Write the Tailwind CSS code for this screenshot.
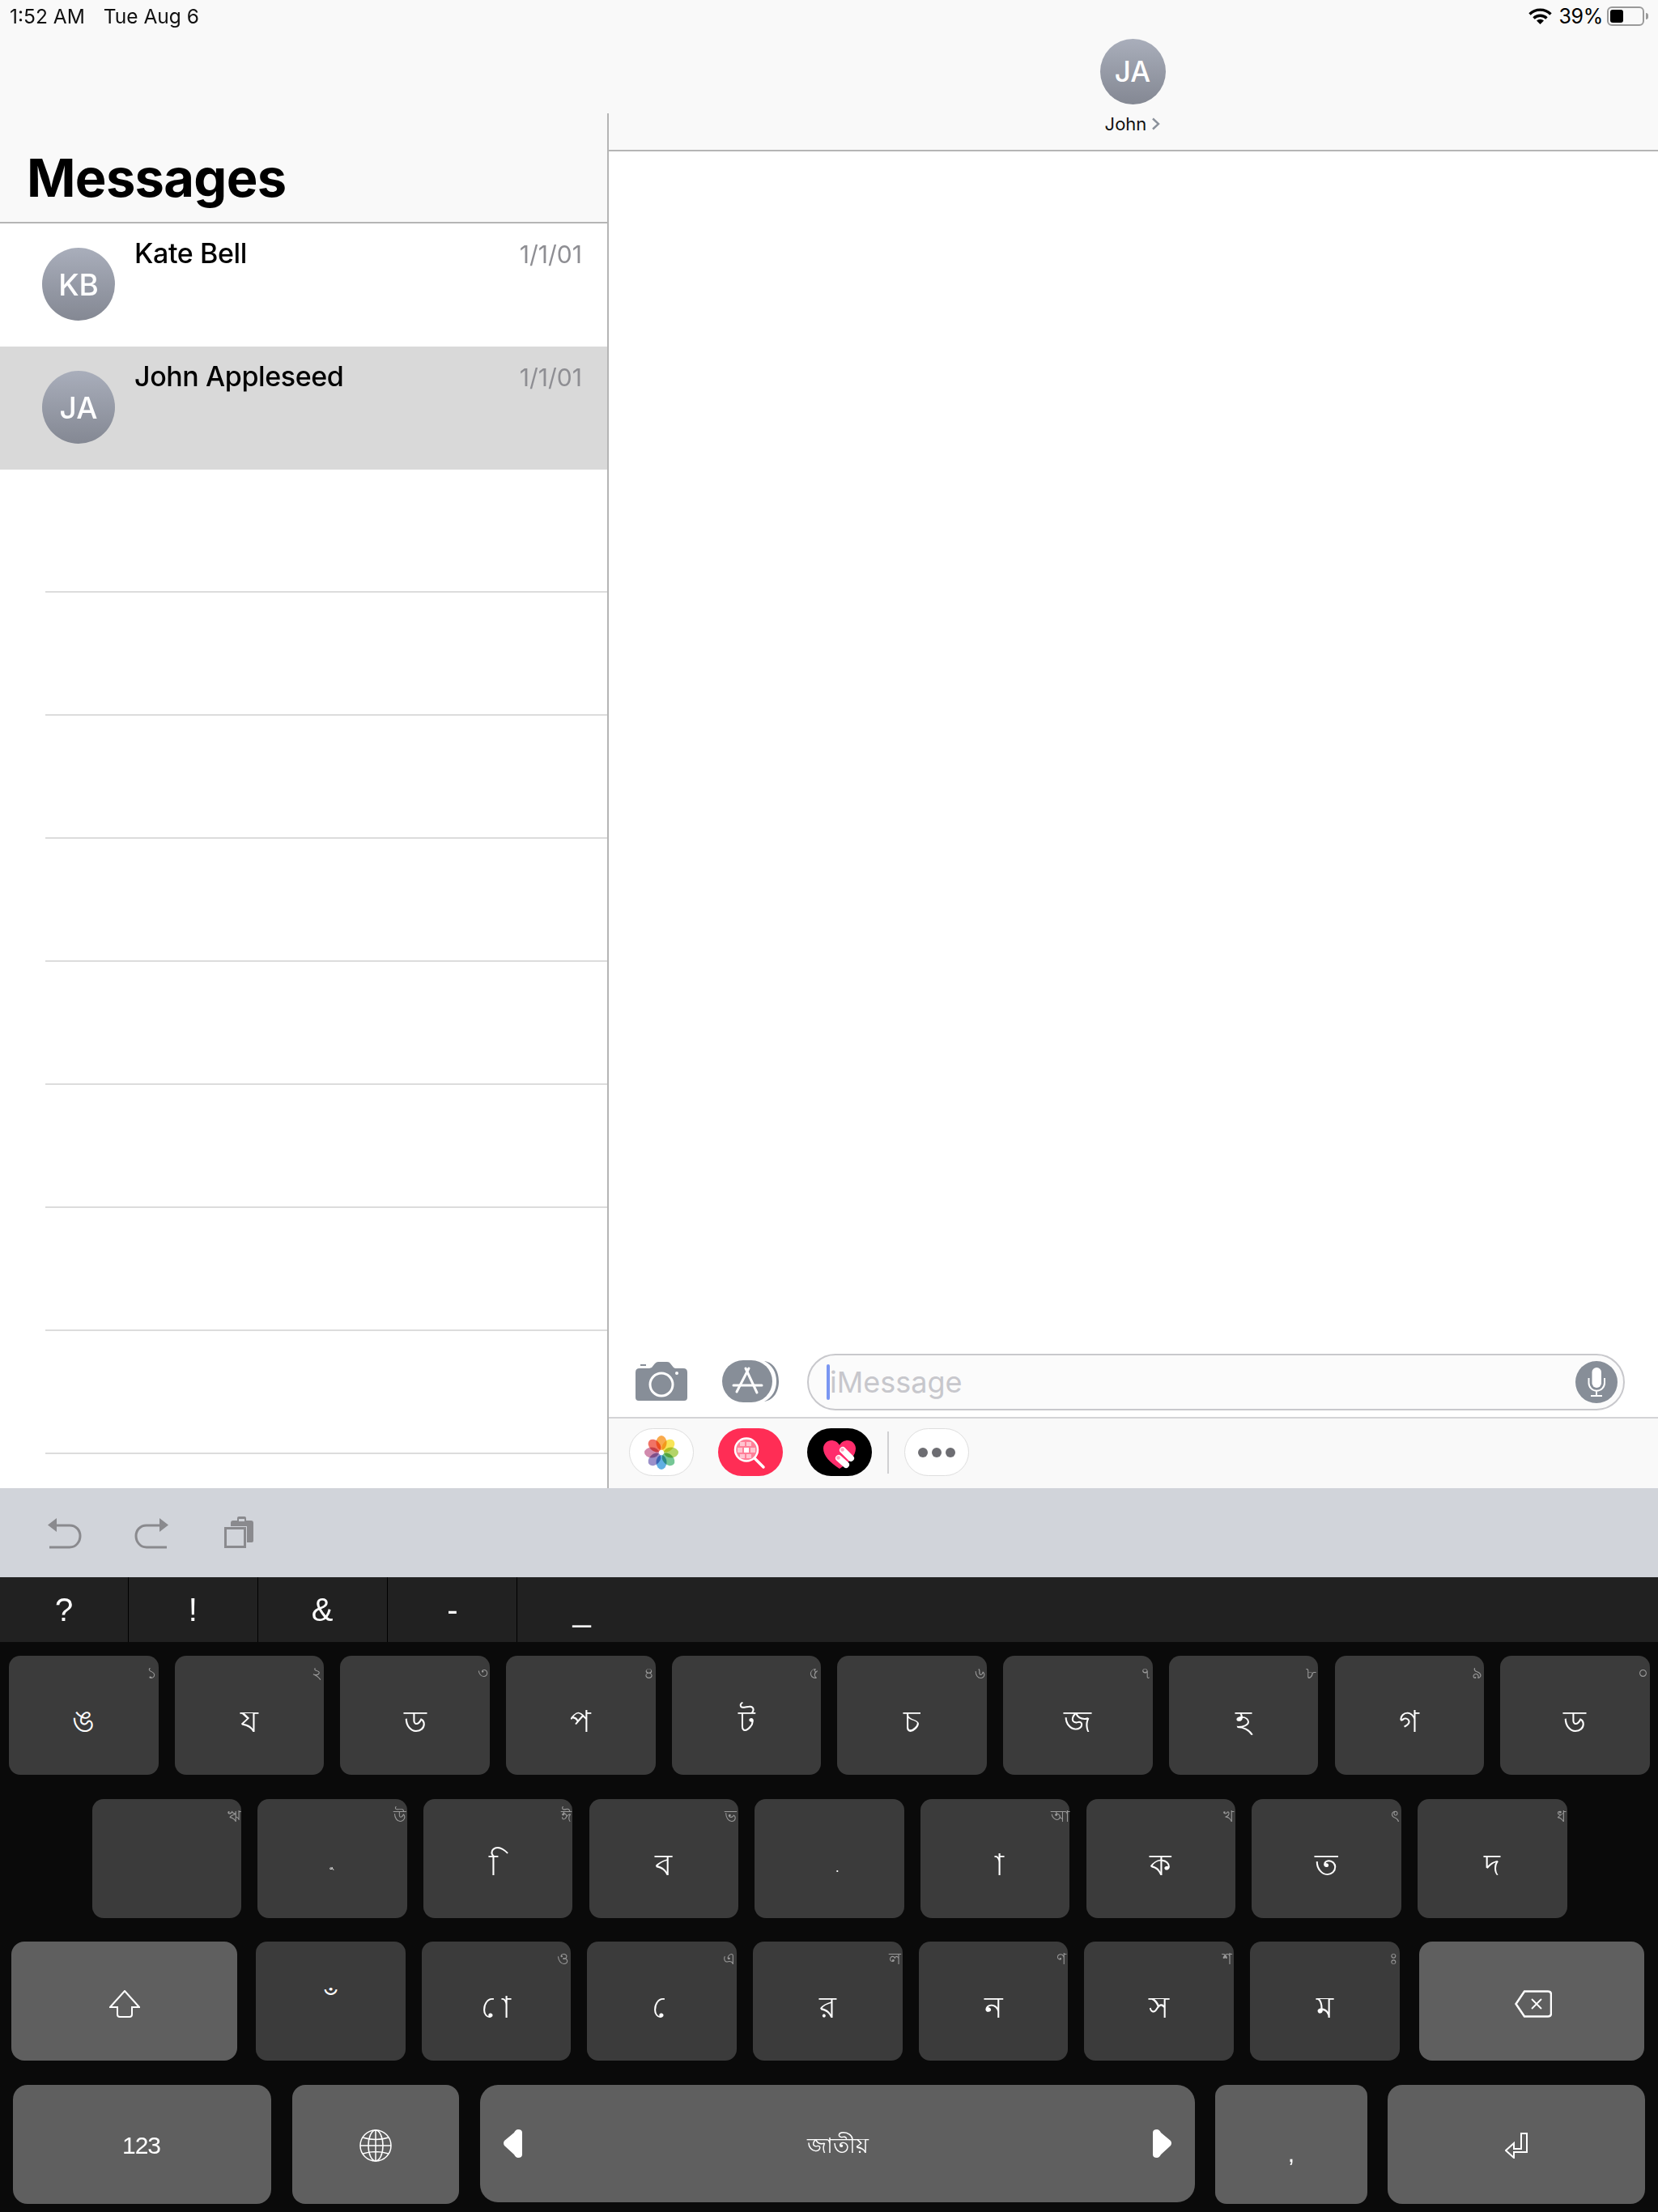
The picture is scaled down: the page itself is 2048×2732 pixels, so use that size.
<!DOCTYPE html>
<html lang="en">
<head>
<meta charset="UTF-8">
<title>Messages</title>
<script src="https://cdn.jsdelivr.net/npm/@tailwindcss/browser@4"></script>
</head>
<body class="w-[2048px] h-[2732px] overflow-hidden bg-white font-['Inter','Noto_Sans',sans-serif] text-black">

<!-- top: conversation list + thread -->
<div class="flex h-[1838px]">
  <aside class="w-[750px] shrink-0 flex flex-col">
    <header class="h-[276px] bg-[#f9f9f9] border-b-2 border-[#b5b5b5] flex flex-col px-[12px]">
      <div class="flex gap-[23px] text-[24.500px] leading-[40px] text-[#111]"><span>1:52 AM</span><span>Tue Aug 6</span></div>
      <h1 class="mt-[140px] ml-[21px] text-[65px] leading-[80px] font-bold tracking-[-0.7px]">Messages</h1>
    </header>
    <div class="h-[152px] flex pl-[52px] pr-[31px] pt-[30px]">
      <div class="w-[90px] h-[90px] pt-[2px] rounded-full bg-linear-to-b from-[#a9aebb] to-[#848893] flex items-center justify-center text-white text-[37px] font-medium">KB</div>
      <div class="ml-[24px] -mt-[17px] text-[34px] leading-[48px] font-medium tracking-[-0.4px]">Kate Bell</div>
      <div class="ml-auto -mt-[16px] text-[30px] leading-[48px] text-[#8e8e93]">1/1/01</div>
    </div>
    <div class="h-[152px] flex pl-[52px] pr-[31px] pt-[30px] bg-[#d9d9d9]">
      <div class="w-[90px] h-[90px] pt-[2px] rounded-full bg-linear-to-b from-[#a9aebb] to-[#848893] flex items-center justify-center text-white text-[37px] font-medium">JA</div>
      <div class="ml-[24px] -mt-[17px] text-[34px] leading-[48px] font-medium tracking-[-0.4px]">John Appleseed</div>
      <div class="ml-auto -mt-[16px] text-[30px] leading-[48px] text-[#8e8e93]">1/1/01</div>
    </div>
    <div class="h-[152px] ml-[56px] border-b-2 border-[#dcdcdc]"></div>
    <div class="h-[152px] ml-[56px] border-b-2 border-[#dcdcdc]"></div>
    <div class="h-[152px] ml-[56px] border-b-2 border-[#dcdcdc]"></div>
    <div class="h-[152px] ml-[56px] border-b-2 border-[#dcdcdc]"></div>
    <div class="h-[152px] ml-[56px] border-b-2 border-[#dcdcdc]"></div>
    <div class="h-[152px] ml-[56px] border-b-2 border-[#dcdcdc]"></div>
    <div class="h-[152px] ml-[56px] border-b-2 border-[#dcdcdc]"></div>
    <div class="h-[152px] ml-[56px] border-b-2 border-[#dcdcdc]"></div>
  </aside>

  <main class="flex-1 flex flex-col relative">
    <div class="absolute z-10 left-0 top-[140px] bottom-0 w-[2px] bg-[#b5b5b5]"></div>
    <header class="h-[187px] bg-[#f9f9f9] border-b-2 border-[#b5b5b5] relative flex flex-col items-center pt-[48px]">
      <div class="absolute right-[12px] top-[8px] flex items-center h-[24px]">
        <svg class="w-[29px] h-[20px] mr-[8px]" viewBox="0 0 29 20" fill="none" stroke="#000" stroke-width="3.4"><path d="M1.5 7.5a18.5 18.5 0 0 1 26 0"/><path d="M6.5 12.5a11.5 11.5 0 0 1 16 0"/><path d="M14.5 20l-4.5-4.5a6.5 6.5 0 0 1 9 0z" fill="#000" stroke="none"/></svg>
        <span class="text-[25px] leading-[24px] tracking-[-0.3px] mr-[5px]">39%</span>
        <div class="w-[46px] h-[24px] rounded-[6px] border-2 border-[#9a9a9a] p-[2px]"><div class="w-[16px] h-full rounded-[3px] bg-black"></div></div>
        <div class="w-[3px] h-[8px] rounded-r-full bg-[#9a9a9a] ml-[2px]"></div>
      </div>
      <div class="w-[81px] h-[81px] rounded-full bg-linear-to-b from-[#a9aebb] to-[#848893] flex items-center justify-center text-white text-[35px] font-medium">JA</div>
      <div class="mt-[10px] flex items-center text-[22px] leading-[28px] text-[#111]">John
        <svg class="ml-[6px] w-[11px] h-[16px]" viewBox="0 0 11 16" fill="none" stroke="#8a919b" stroke-width="2.4"><path d="M2 1.5l7 6.5-7 6.5"/></svg>
      </div>
    </header>
    <div class="flex-1"></div>
    <!-- compose row -->
    <div class="h-[78px] flex items-start pl-[35px] bg-white">
      <svg class="w-[64px] h-[48px] mt-[10px]" viewBox="0 0 64 48"><path fill-rule="evenodd" fill="#878e98" d="M5 8h12l3-1 4-5q2-2 4-2h11q3 0 4 2l4 5 2 1h10q5 0 5 5v31q0 4-4 4H4q-4 0-4-4V13q0-5 5-5zM6 3h7v2H6z"/><circle cx="32" cy="28" r="14" fill="none" stroke="#fff" stroke-width="3"/><circle cx="51" cy="14" r="2" fill="#fff"/></svg>
      <svg class="w-[70px] h-[52px] ml-[43px] mt-[8px]" viewBox="0 0 70 52"><path fill="#878e98" d="M52 1c10 5 15 14 15 25s-5 20-15 25c13-2 18-14 18-25S65 3 52 1z"/><rect width="62" height="52" rx="26" fill="#878e98"/><g stroke="#fff" stroke-width="3" stroke-linecap="round" fill="none"><path d="M29 10l14 30"/><path d="M33 10L18 39"/><path d="M14 31h35"/></g></svg>
      <div class="ml-[35px] w-[1010px] h-[70px] rounded-full border-2 border-[#c8c8cc] bg-[#fbfbfb] flex items-center pl-[22px] pr-[7px] relative">
        <div class="w-[4px] h-[44px] rounded-full bg-[#7a96f2]"></div>
        <span class="text-[36px] text-[#c7c7cc] leading-[44px]">iMessage</span>
        <svg class="w-[52px] h-[52px] ml-auto" viewBox="0 0 52 52"><circle cx="26" cy="26" r="26" fill="#878e98"/><rect x="20.5" y="8" width="11.5" height="25" rx="5.7" fill="#fff"/><g fill="none" stroke="#fff" stroke-width="2"><path d="M16.5 21v6a9.700 9.700 0 0 0 19.500 0v-6"/><path d="M26 37v6"/><path d="M19 43h14"/></g></svg>
      </div>
    </div>
    <!-- app strip -->
    <div class="h-[88px] border-t-2 border-[#d4d4d6] bg-[#f9f9f9] flex items-start pl-[27px] pt-[12px]">
      <div class="w-[80px] h-[59px] rounded-[30px] bg-white border border-[#dedede] flex items-center justify-center">
        <svg class="w-[42px] h-[42px]" viewBox="-21 -21 42 42">
          <ellipse class="mix-blend-multiply" cx="0" cy="-12" rx="6.500" ry="9" fill="#f8a13a" fill-opacity=".9"/>
          <ellipse class="mix-blend-multiply" cx="0" cy="-12" rx="6.500" ry="9" fill="#f7e03a" fill-opacity=".85" transform="rotate(45)"/>
          <ellipse class="mix-blend-multiply" cx="0" cy="-12" rx="6.500" ry="9" fill="#a6cc4e" fill-opacity=".85" transform="rotate(90)"/>
          <ellipse class="mix-blend-multiply" cx="0" cy="-12" rx="6.500" ry="9" fill="#5ebd84" fill-opacity=".85" transform="rotate(135)"/>
          <ellipse class="mix-blend-multiply" cx="0" cy="-12" rx="6.500" ry="9" fill="#4fa6e0" fill-opacity=".9" transform="rotate(180)"/>
          <ellipse class="mix-blend-multiply" cx="0" cy="-12" rx="6.500" ry="9" fill="#8a7cc0" fill-opacity=".85" transform="rotate(225)"/>
          <ellipse class="mix-blend-multiply" cx="0" cy="-12" rx="6.500" ry="9" fill="#c9759f" fill-opacity=".85" transform="rotate(270)"/>
          <ellipse class="mix-blend-multiply" cx="0" cy="-12" rx="6.500" ry="9" fill="#ee5a4a" fill-opacity=".85" transform="rotate(315)"/>
          <circle r="1.500" fill="#fff"/></svg>
      </div>
      <div class="ml-[30px] w-[80px] h-[59px] rounded-[30px] bg-[#ff2d55] flex items-center justify-center">
        <svg class="w-[80px] h-[59px]" viewBox="0 0 80 59"><circle cx="35" cy="26.500" r="14" fill="#ff7f98" stroke="#fff" stroke-width="2.500"/><g fill="#ffc4d0"><rect x="27" y="17" width="6" height="5"/><rect x="35" y="17" width="6" height="5"/><rect x="24" y="24" width="6" height="6"/><rect x="40" y="24" width="6" height="6"/><rect x="27" y="32" width="6" height="5"/><rect x="35" y="32" width="6" height="5"/></g><rect x="32" y="24" width="6" height="6" fill="#fff"/><path d="M45 37l11 11" stroke="#fff" stroke-width="3.500" stroke-linecap="round"/></svg>
      </div>
      <div class="ml-[30px] w-[80px] h-[59px] rounded-[30px] bg-black flex items-center justify-center">
        <svg class="w-[80px] h-[59px]" viewBox="0 0 80 59"><path fill="#ff2d6c" d="M40 50C28 42 20 34 20 25c0-6 5-10 10-10 4 0 8 2 10 6 2-4 6-6 10-6 5 0 10 4 10 10 0 9-8 17-20 25z"/><g stroke="#fff" stroke-width="8" stroke-linecap="round"><path d="M44 27l10 10"/><path d="M39 37l9 8"/></g><circle cx="43.500" cy="26.500" r="2.300" fill="#ffa6c0"/><circle cx="38.500" cy="36.500" r="2.300" fill="#ffa6c0"/></svg>
      </div>
      <div class="ml-[19px] mt-[4px] w-[2px] h-[52px] bg-[#d0d0d2]"></div>
      <div class="ml-[19px] w-[80px] h-[59px] rounded-[30px] bg-white border border-[#dedede] flex items-center justify-center gap-[5px]">
        <div class="w-[12px] h-[12px] rounded-full bg-[#6d6d72]"></div>
        <div class="w-[12px] h-[12px] rounded-full bg-[#6d6d72]"></div>
        <div class="w-[12px] h-[12px] rounded-full bg-[#6d6d72]"></div>
      </div>
    </div>
  </main>
</div>

<!-- undo / redo / paste bar -->
<div class="h-[110px] bg-[#d1d4da] flex items-start pl-[59px] pt-[37px]">
  <svg class="w-[42px] h-[38px] text-[#8a8a8e]" viewBox="0 0 42 38"><path d="M0 8.500L11 0v17z" fill="currentColor"/><path d="M10 9h17c8 0 13 6 13 13s-5 14-13 14H2" fill="none" stroke="currentColor" stroke-width="3"/></svg>
  <svg class="w-[42px] h-[38px] ml-[65px] -scale-x-100 text-[#8a8a8e]" viewBox="0 0 42 38"><path d="M0 8.500L11 0v17z" fill="currentColor"/><path d="M10 9h17c8 0 13 6 13 13s-5 14-13 14H2" fill="none" stroke="currentColor" stroke-width="3"/></svg>
  <svg class="w-[36px] h-[39px] ml-[69px] -mt-[2px] text-[#8a8a8e]" viewBox="0 0 36 39"><path fill="currentColor" d="M8 8q0-3 3-3h5V2q0-2 2-2h7q2 0 2 2v3h6q3 0 3 3v22q0 2-2 2h-6V12H8z"/><rect x="18" y="3" width="7" height="3" fill="#d1d4da"/><rect x="1.500" y="14.500" width="24" height="23" fill="#d1d4da" stroke="currentColor" stroke-width="3"/></svg>
</div>

<!-- keyboard -->
<div class="h-[784px] bg-[#0a0a0a] text-white">
  <div class="h-[80px] bg-[#212121] flex text-[40px] font-['Liberation_Sans',sans-serif]">
    <div class="w-[159px] border-r border-black flex items-center justify-center">?</div>
    <div class="w-[159.500px] border-r border-black flex items-center justify-center">!</div>
    <div class="w-[160px] border-r border-black flex items-center justify-center">&amp;</div>
    <div class="w-[160px] border-r border-black flex items-center justify-center pl-[2px]">-</div>
    <div class="w-[160px] flex items-center justify-center">_</div>
  </div>

  <div class="flex gap-[20.200px] pl-[11px] pt-[17px]">
    <div class="w-[184.500px] h-[147px] rounded-[14px] bg-[#3b3b3b] relative flex items-center justify-center pt-[14px] text-[38px]">ঙ<span class="absolute right-[2px] top-[6px] text-[20px] text-[#9a9a9a]">১</span></div>
    <div class="w-[184.500px] h-[147px] rounded-[14px] bg-[#3b3b3b] relative flex items-center justify-center pt-[14px] text-[38px]">য<span class="absolute right-[2px] top-[6px] text-[20px] text-[#9a9a9a]">২</span></div>
    <div class="w-[184.500px] h-[147px] rounded-[14px] bg-[#3b3b3b] relative flex items-center justify-center pt-[14px] text-[38px]">ড<span class="absolute right-[2px] top-[6px] text-[20px] text-[#9a9a9a]">৩</span></div>
    <div class="w-[184.500px] h-[147px] rounded-[14px] bg-[#3b3b3b] relative flex items-center justify-center pt-[14px] text-[38px]">প<span class="absolute right-[2px] top-[6px] text-[20px] text-[#9a9a9a]">৪</span></div>
    <div class="w-[184.500px] h-[147px] rounded-[14px] bg-[#3b3b3b] relative flex items-center justify-center pt-[14px] text-[38px]">ট<span class="absolute right-[2px] top-[6px] text-[20px] text-[#9a9a9a]">৫</span></div>
    <div class="w-[184.500px] h-[147px] rounded-[14px] bg-[#3b3b3b] relative flex items-center justify-center pt-[14px] text-[38px]">চ<span class="absolute right-[2px] top-[6px] text-[20px] text-[#9a9a9a]">৬</span></div>
    <div class="w-[184.500px] h-[147px] rounded-[14px] bg-[#3b3b3b] relative flex items-center justify-center pt-[14px] text-[38px]">জ<span class="absolute right-[2px] top-[6px] text-[20px] text-[#9a9a9a]">৭</span></div>
    <div class="w-[184.500px] h-[147px] rounded-[14px] bg-[#3b3b3b] relative flex items-center justify-center pt-[14px] text-[38px]">হ<span class="absolute right-[2px] top-[6px] text-[20px] text-[#9a9a9a]">৮</span></div>
    <div class="w-[184.500px] h-[147px] rounded-[14px] bg-[#3b3b3b] relative flex items-center justify-center pt-[14px] text-[38px]">গ<span class="absolute right-[2px] top-[6px] text-[20px] text-[#9a9a9a]">৯</span></div>
    <div class="w-[184.500px] h-[147px] rounded-[14px] bg-[#3b3b3b] relative flex items-center justify-center pt-[14px] text-[38px]">ড<span class="absolute right-[2px] top-[6px] text-[20px] text-[#9a9a9a]">০</span></div>
  </div>

  <div class="flex gap-[20.200px] pl-[113.500px] pt-[29.700px]">
    <div class="w-[184.500px] h-[147px] rounded-[14px] bg-[#3b3b3b] relative flex items-center justify-center pt-[14px] text-[38px]"><span class="absolute right-[0px] top-[6px] text-[20px] text-[#9a9a9a]">ঋ</span></div>
    <div class="w-[184.500px] h-[147px] rounded-[14px] bg-[#3b3b3b] relative flex items-center justify-center pt-[14px] text-[12px]">&nbsp;ু<span class="absolute right-[1px] top-[6px] text-[20px] text-[#9a9a9a]">উ</span></div>
    <div class="w-[184.500px] h-[147px] rounded-[14px] bg-[#3b3b3b] relative flex items-center justify-center pt-[14px] text-[38px]">&nbsp;ি<span class="absolute right-[1px] top-[6px] text-[20px] text-[#9a9a9a]">ঈ</span></div>
    <div class="w-[184.500px] h-[147px] rounded-[14px] bg-[#3b3b3b] relative flex items-center justify-center pt-[14px] text-[38px]">ব<span class="absolute right-[2px] top-[6px] text-[20px] text-[#9a9a9a]">ভ</span></div>
    <div class="w-[184.500px] h-[147px] rounded-[14px] bg-[#3b3b3b] relative flex items-center justify-center pt-[14px] text-[20px]">&nbsp;়</div>
    <div class="w-[184.500px] h-[147px] rounded-[14px] bg-[#3b3b3b] relative flex items-center justify-center pt-[14px] text-[38px]">&nbsp;া<span class="absolute right-[0px] top-[6px] text-[20px] text-[#9a9a9a]">আ</span></div>
    <div class="w-[184.500px] h-[147px] rounded-[14px] bg-[#3b3b3b] relative flex items-center justify-center pt-[14px] text-[38px]">ক<span class="absolute right-[2px] top-[6px] text-[20px] text-[#9a9a9a]">খ</span></div>
    <div class="w-[184.500px] h-[147px] rounded-[14px] bg-[#3b3b3b] relative flex items-center justify-center pt-[14px] text-[38px]">ত<span class="absolute right-[2px] top-[6px] text-[20px] text-[#9a9a9a]">ৎ</span></div>
    <div class="w-[184.500px] h-[147px] rounded-[14px] bg-[#3b3b3b] relative flex items-center justify-center pt-[14px] text-[38px]">দ<span class="absolute right-[2px] top-[6px] text-[20px] text-[#9a9a9a]">ধ</span></div>
  </div>

  <div class="flex pl-[14px] pt-[29.700px]">
    <div class="w-[279px] h-[147px] rounded-[16px] bg-[#5f5f5f] flex items-center justify-center pt-[6px]">
      <svg class="w-[38px] h-[34px]" viewBox="0 0 38 34" fill="none" stroke="#fff" stroke-width="2"><path d="M19 1l18 20h-9v9q0 3-3 3H13q-3 0-3-3v-9H1z"/></svg>
    </div>
    <div class="flex gap-[20.200px] ml-[23px]">
      <div class="w-[184.500px] h-[147px] rounded-[14px] bg-[#3b3b3b] relative flex items-center justify-center pt-[14px] text-[38px]">&nbsp;ঁ</div>
      <div class="w-[184.500px] h-[147px] rounded-[14px] bg-[#3b3b3b] relative flex items-center justify-center pt-[14px] text-[38px]">&nbsp;ো<span class="absolute right-[2px] top-[6px] text-[20px] text-[#9a9a9a]">ও</span></div>
      <div class="w-[184.500px] h-[147px] rounded-[14px] bg-[#3b3b3b] relative flex items-center justify-center pt-[14px] text-[38px]">&nbsp;ে<span class="absolute right-[2px] top-[6px] text-[20px] text-[#9a9a9a]">এ</span></div>
      <div class="w-[184.500px] h-[147px] rounded-[14px] bg-[#3b3b3b] relative flex items-center justify-center pt-[14px] text-[38px]">র<span class="absolute right-[2px] top-[6px] text-[20px] text-[#9a9a9a]">ল</span></div>
      <div class="w-[184.500px] h-[147px] rounded-[14px] bg-[#3b3b3b] relative flex items-center justify-center pt-[14px] text-[38px]">ন<span class="absolute right-[2px] top-[6px] text-[20px] text-[#9a9a9a]">ণ</span></div>
      <div class="w-[184.500px] h-[147px] rounded-[14px] bg-[#3b3b3b] relative flex items-center justify-center pt-[14px] text-[38px]">স<span class="absolute right-[2px] top-[6px] text-[20px] text-[#9a9a9a]">শ</span></div>
      <div class="w-[184.500px] h-[147px] rounded-[14px] bg-[#3b3b3b] relative flex items-center justify-center pt-[14px] text-[38px]">ম<span class="absolute right-[2px] top-[6px] text-[20px] text-[#9a9a9a]">&nbsp;ঃ</span></div>
    </div>
    <div class="ml-[24px] w-[278px] h-[147px] rounded-[16px] bg-[#5f5f5f] flex items-center justify-center pl-[5px] pt-[6px]">
      <svg class="w-[46px] h-[34px]" viewBox="0 0 46 34" fill="none" stroke="#fff" stroke-width="2.500"><path d="M12 1.500h29q4 0 4 4v23q0 4-4 4H12L1.500 17z"/><path d="M21 11l12 12M33 11L21 23" stroke-width="1.800"/></svg>
    </div>
  </div>

  <div class="flex pl-[16px] pt-[29.700px] items-start">
    <div class="w-[319px] h-[147px] rounded-[18px] bg-[#5f5f5f] flex items-center justify-center pt-[2px] pr-[2px] text-[30px] tracking-[-1px] font-['Liberation_Sans',sans-serif]">123</div>
    <div class="ml-[26px] w-[206px] h-[147px] rounded-[16px] bg-[#5f5f5f] flex items-center justify-center pt-[2px]">
      <svg class="w-[40px] h-[40px]" viewBox="0 0 40 40" fill="none" stroke="#fff" stroke-width="1.500"><circle cx="20" cy="20" r="19"/><ellipse cx="20" cy="20" rx="9" ry="19"/><path d="M20 1v38M1 20h38M4 10q16 5 32 0M4 30q16-5 32 0"/></svg>
    </div>
    <div class="ml-[26px] w-[883px] h-[145px] rounded-[22px] bg-[#5f5f5f] flex items-center justify-between px-[29px] text-[27px]">
      <svg class="w-[23px] h-[35px]" viewBox="0 0 23 35"><path fill="#fff" d="M18 0q5 0 5 4v27q0 4-5 4-3 0-5-4L1 20q-2-3 0-6L13 4q2-4 5-4z"/></svg>
      <span class="pt-[5px]">জাতীয়</span>
      <svg class="w-[23px] h-[35px] -scale-x-100" viewBox="0 0 23 35"><path fill="#fff" d="M18 0q5 0 5 4v27q0 4-5 4-3 0-5-4L1 20q-2-3 0-6L13 4q2-4 5-4z"/></svg>
    </div>
    <div class="ml-[25px] w-[188px] h-[147px] rounded-[14px] bg-[#5f5f5f] flex items-center justify-center pt-[22px] text-[30px] font-['Liberation_Sans',sans-serif]">,</div>
    <div class="ml-[25px] w-[318px] h-[147px] rounded-[18px] bg-[#5f5f5f] flex items-center justify-center pt-[2px]">
      <svg class="w-[29px] h-[32px]" viewBox="0 0 29 32" fill="none" stroke="#fff" stroke-width="2"><path d="M20 1h7v23H11v7L1 22l10-9v7h9z"/></svg>
    </div>
  </div>
</div>
</body>
</html>
